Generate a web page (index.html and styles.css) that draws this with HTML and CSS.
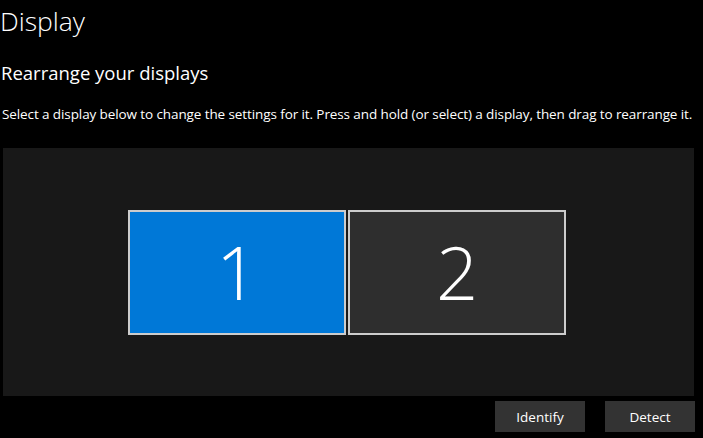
FILE: index.html
```html
<!DOCTYPE html>
<html>
<head>
<meta charset="utf-8">
<link rel="stylesheet" href="styles.css">
</head>
<body>
<div class="page">
  <h1 class="title">Display</h1>
  <h2 class="subtitle">Rearrange your displays</h2>
  <p class="desc">Select a display below to change the settings for it. Press and hold (or select) a display, then drag to rearrange it.</p>
  <div class="canvas">
    <div class="monitors">
      <div class="monitor selected">1</div>
      <div class="monitor">2</div>
    </div>
  </div>
  <div class="actions">
    <button class="btn">Identify</button>
    <button class="btn">Detect</button>
  </div>
</div>
</body>
</html>
```
FILE: styles.css
```css
html, body {
  margin: 0;
  padding: 0;
  background: #000;
  color: #fff;
  font-family: "Open Sans", "Noto Sans", sans-serif;
  overflow: hidden;
}
.page {
  width: 703px;
  height: 438px;
}
.title {
  margin: 0;
  padding: 4px 0 0 0;
  font-size: 26.5px;
  font-weight: 300;
  line-height: 34px;
}
.subtitle {
  margin: 23px 0 0 1px;
  font-size: 18.5px;
  font-weight: 400;
  line-height: 24px;
}
.desc {
  margin: 19px 0 0 2px;
  font-size: 13.5px;
  line-height: 20px;
  white-space: nowrap;
  letter-spacing: -0.1px;
}
.canvas {
  margin: 24px 0 0 3px;
  width: 691px;
  height: 248px;
  background: #181818;
  display: flex;
  justify-content: center;
  align-items: flex-start;
}
.monitors {
  margin-top: 62px;
  margin-right: 3px;
  display: flex;
  gap: 2px;
}
.monitor {
  width: 214px;
  height: 119px;
  border: 2px solid #cccccc;
  background: #2e2e2e;
  display: flex;
  align-items: center;
  justify-content: center;
  font-size: 74px;
  font-weight: 300;
  line-height: 1;
  padding-bottom: 2px;
  box-sizing: content-box;
}
.monitor.selected {
  background: #0078d7;
}
.actions {
  display: flex;
  justify-content: flex-end;
  gap: 20px;
  margin-top: 5px;
  padding-right: 8px;
}
.btn {
  width: 90px;
  height: 31px;
  border: none;
  background: #333333;
  color: #fff;
  font-family: "Open Sans", "Noto Sans", sans-serif;
  font-size: 13.5px;
  padding: 0;
}
```
